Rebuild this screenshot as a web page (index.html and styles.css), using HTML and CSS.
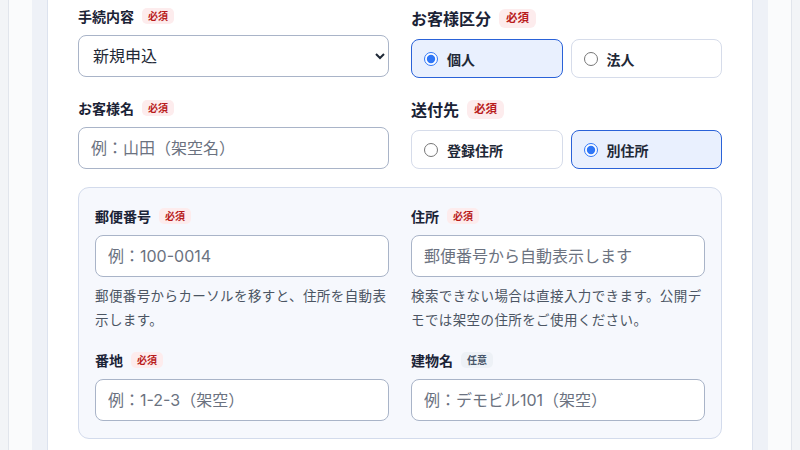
FILE: index.html
```html
<!DOCTYPE html>
<html lang="ja">
<head>
<meta charset="utf-8">
<title>お申込みフォーム</title>
<link rel="stylesheet" href="styles.css">
</head>
<body>
<div class="frame">
  <div class="band">
    <main class="card">
      <div class="top-grid">
        <div class="col">
          <div class="field">
            <label class="label" for="proc">手続内容<span class="badge req">必須</span></label>
            <select id="proc" class="control select">
              <option>新規申込</option>
            </select>
          </div>
          <div class="field field-gap">
            <label class="label" for="name">お客様名<span class="badge req">必須</span></label>
            <input id="name" class="control" type="text" placeholder="例：山田（架空名）">
          </div>
        </div>
        <div class="col col-right">
          <fieldset class="group">
            <legend class="legend">お客様区分<span class="badge req big">必須</span></legend>
            <div class="choices">
              <label class="choice selected"><input type="radio" name="type" checked><span>個人</span></label>
              <label class="choice"><input type="radio" name="type"><span>法人</span></label>
            </div>
          </fieldset>
          <fieldset class="group group-gap">
            <legend class="legend">送付先<span class="badge req big">必須</span></legend>
            <div class="choices">
              <label class="choice"><input type="radio" name="dest"><span>登録住所</span></label>
              <label class="choice selected"><input type="radio" name="dest" checked><span>別住所</span></label>
            </div>
          </fieldset>
        </div>
      </div>

      <section class="address">
        <div class="field">
          <label class="label" for="zip">郵便番号<span class="badge req">必須</span></label>
          <input id="zip" class="control" type="text" placeholder="例：100-0014">
          <p class="help">郵便番号からカーソルを移すと、住所を自動表示します。</p>
        </div>
        <div class="field">
          <label class="label" for="addr">住所<span class="badge req">必須</span></label>
          <input id="addr" class="control" type="text" placeholder="郵便番号から自動表示します">
          <p class="help">検索できない場合は直接入力できます。公開デモでは架空の住所をご使用ください。</p>
        </div>
        <div class="field">
          <label class="label" for="banchi">番地<span class="badge req">必須</span></label>
          <input id="banchi" class="control" type="text" placeholder="例：1-2-3（架空）">
        </div>
        <div class="field">
          <label class="label" for="bldg">建物名<span class="badge opt">任意</span></label>
          <input id="bldg" class="control" type="text" placeholder="例：デモビル101（架空）">
        </div>
      </section>
    </main>
  </div>
</div>
</body>
</html>
```

FILE: styles.css
```css
* { box-sizing: border-box; }

html, body {
  margin: 0;
  height: 450px;
  overflow: hidden;
}

body {
  background: #f2f4f7;
  font-family: Inter, "Noto Sans CJK JP", sans-serif;
  color: #1e293b;
}

.frame {
  margin: 0 8px;
  height: 450px;
  background: #fafbfc;
  border-left: 1px solid #e1e5ec;
  border-right: 1px solid #e1e5ec;
  padding: 0 23px;
}

.band {
  height: 100%;
  background: #eef1f7;
  padding: 0 15px;
}

.card {
  height: 100%;
  background: #ffffff;
  border-left: 1px solid #dce2ee;
  border-right: 1px solid #dce2ee;
  padding: 5px 30px 0;
}

.top-grid {
  display: grid;
  grid-template-columns: 1fr 1fr;
  column-gap: 22px;
}

.col {
  display: flex;
  flex-direction: column;
}

.col-right { padding-top: 1px; }

.field {
  display: flex;
  flex-direction: column;
  min-width: 0;
}

.field-gap { margin-top: 20px; }

.label {
  display: flex;
  align-items: center;
  height: 22px;
  margin-bottom: 8px;
  font-size: 14px;
  font-weight: 700;
  color: #1b2336;
}

.badge {
  display: inline-block;
  margin-left: 8px;
  font-size: 10px;
  font-weight: 700;
  line-height: 12px;
  padding: 2px 6px;
  border-radius: 5px;
}

.badge.req {
  color: #b91c1c;
  background: #fdeced;
}

.badge.big {
  font-size: 11.5px;
  line-height: 13px;
  padding: 3px 7px;
  border-radius: 6px;
}

.badge.opt {
  color: #475569;
  background: #edf1f6;
}

.control {
  display: block;
  width: 100%;
  height: 42px;
  padding: 0 12px;
  border: 1px solid #a9b4c8;
  border-radius: 8px;
  background: #ffffff;
  font-family: Inter, "Noto Sans CJK JP", sans-serif;
  font-size: 16px;
  color: #1f2937;
}

.control::placeholder {
  color: #6b7280;
}

.select {
  padding: 0 8px 0 10px;
}

.group {
  margin: 0;
  padding: 0;
  border: 0;
  min-width: 0;
}

.group-gap { margin-top: 19px; }

.legend {
  display: flex;
  align-items: center;
  height: 24px;
  padding: 0;
  margin-bottom: 9px;
  font-size: 16px;
  font-weight: 700;
  color: #1b2336;
}

.choices {
  display: grid;
  grid-template-columns: 1fr 1fr;
  column-gap: 8px;
}

.choice {
  display: flex;
  align-items: center;
  gap: 9px;
  height: 39px;
  padding: 0 12px;
  border: 1px solid #d6dcea;
  border-radius: 8px;
  background: #ffffff;
  font-size: 14px;
  font-weight: 600;
  color: #1f2937;
}

.choice input {
  margin: 0;
  width: 14px;
  height: 14px;
  accent-color: #2f76f6;
}

.choice.selected {
  border-color: #2a62d8;
  background: #e9f0fe;
}

.address {
  margin-top: 18px;
  display: grid;
  grid-template-columns: 1fr 1fr;
  column-gap: 22px;
  row-gap: 17px;
  padding: 17px 16px 17px;
  border: 1px solid #d3dbec;
  border-radius: 11px;
  background: #f6f8fd;
}

.help {
  margin: 7px 0 0;
  font-size: 13.5px;
  letter-spacing: 0.4px;
  line-height: 24px;
  color: #4b5563;
}
```
